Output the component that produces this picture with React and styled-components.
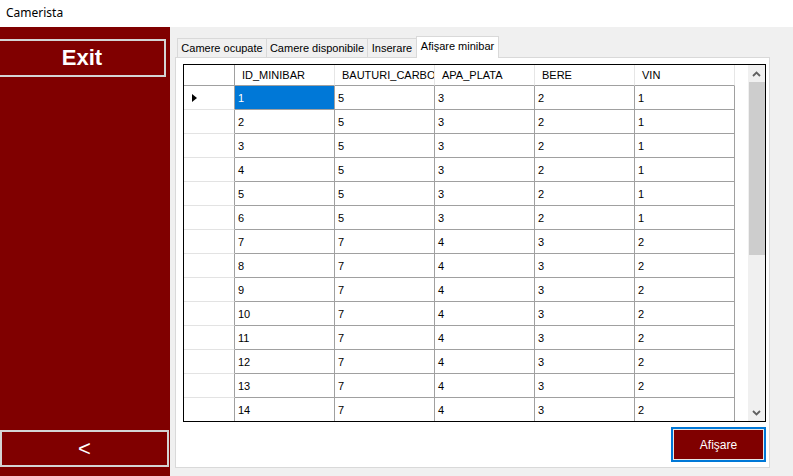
import React from "react";
import styled, { createGlobalStyle } from "styled-components";

const GlobalStyle = createGlobalStyle`
  html, body {
    margin: 0;
    padding: 0;
  }
  body {
    font-family: "Liberation Sans", Arial, sans-serif;
    background: #f0f0f0;
  }
  * {
    box-sizing: border-box;
  }
`;

const Window = styled.div`
  width: 793px;
  height: 476px;
  display: flex;
  flex-direction: column;
  background: #f0f0f0;
  overflow: hidden;
`;

const TitleBar = styled.div`
  height: 27px;
  background: #ffffff;
  display: flex;
  align-items: center;
  padding: 0 0 2px 6px;
  font-family: "Noto Sans", "Liberation Sans", sans-serif;
  font-size: 12px;
  color: #000;
`;

const Body = styled.div`
  flex: 1;
  display: flex;
`;

const Sidebar = styled.div`
  width: 170px;
  background: #800000;
  display: flex;
  flex-direction: column;
  justify-content: space-between;
  padding: 12px 0 9px;
`;

const SideButton = styled.button`
  width: ${(p) => p.$w}px;
  height: ${(p) => p.$h}px;
  margin-left: ${(p) => p.$offset || 0}px;
  border: 2px solid #d4d4d4;
  background: #800000;
  color: #fff;
  font-family: "Liberation Sans", Arial, sans-serif;
  font-weight: ${(p) => (p.$bold ? 700 : 400)};
  font-size: 22px;
  padding: 0;
  display: flex;
  align-items: center;
  justify-content: center;
`;

const Content = styled.div`
  flex: 1;
  display: flex;
  flex-direction: column;
  padding: 9px 23px 8px 5px;
`;

const TabStrip = styled.div`
  height: 21px;
  display: flex;
  align-items: flex-end;
  padding-left: 2px;
`;

const Tab = styled.div`
  width: ${(p) => p.$w}px;
  height: ${(p) => (p.$active ? 22 : 19)}px;
  margin-left: ${(p) => (p.$first ? 0 : -1)}px;
  margin-bottom: ${(p) => (p.$active ? -1 : 0)}px;
  position: relative;
  z-index: ${(p) => (p.$active ? 1 : 0)};
  border: 1px solid #d9d9d9;
  border-bottom: none;
  background: ${(p) => (p.$active ? "#ffffff" : "#f0f0f0")};
  font-size: 11px;
  color: #000;
  display: flex;
  align-items: center;
  justify-content: center;
  padding-bottom: ${(p) => (p.$active ? 3 : 1)}px;
  white-space: nowrap;
`;

const TabPage = styled.div`
  flex: 1;
  border: 1px solid #d9d9d9;
  background: #ffffff;
  display: flex;
  flex-direction: column;
  padding: 6px 3px 5px 7px;
`;

const Grid = styled.div`
  height: 358px;
  border: 1px solid #000;
  background: #fff;
  display: flex;
  overflow: hidden;
`;

const GridBody = styled.div`
  flex: 1;
  display: flex;
  flex-direction: column;
  overflow: hidden;
`;

const Row = styled.div`
  display: grid;
  grid-template-columns: 51px repeat(5, 100px);
  height: ${(p) => (p.$header ? 21 : 24)}px;
  flex-shrink: 0;
`;

const HeaderCell = styled.div`
  border-right: 1px solid ${(p) => (p.$corner ? "#a0a0a0" : "#e6e6e6")};
  border-bottom: 1px solid #a0a0a0;
  padding-left: 7px;
  display: flex;
  align-items: center;
  font-size: 11px;
  color: #000;
  white-space: nowrap;
  overflow: hidden;
`;

const RowHeader = styled.div`
  border-right: 1px solid #a0a0a0;
  border-bottom: 1px solid #e3e3e3;
  display: flex;
  align-items: center;
  padding-left: 8px;
`;

const Arrow = styled.span`
  width: 0;
  height: 0;
  border-top: 4px solid transparent;
  border-bottom: 4px solid transparent;
  border-left: 5px solid #000;
`;

const Cell = styled.div`
  border-right: 1px solid #a0a0a0;
  border-bottom: 1px solid #a0a0a0;
  padding-left: 3px;
  display: flex;
  align-items: center;
  font-size: 11px;
  background: ${(p) => (p.$selected ? "#0078d7" : "#fff")};
  color: ${(p) => (p.$selected ? "#fff" : "#000")};
`;

const Scrollbar = styled.div`
  width: 17px;
  background: #f0f0f0;
  display: flex;
  flex-direction: column;
`;

const ScrollArrow = styled.div`
  height: 17px;
  display: flex;
  align-items: center;
  justify-content: center;
  flex-shrink: 0;
`;

const Thumb = styled.div`
  height: 173px;
  margin-left: 1px;
  background: #cdcdcd;
  flex-shrink: 0;
`;

const Track = styled.div`
  flex: 1;
`;

const Footer = styled.div`
  display: flex;
  justify-content: flex-end;
  margin-top: 5px;
`;

const ActionButton = styled.button`
  width: 95px;
  height: 35px;
  border: 2px solid #0078d7;
  box-shadow: inset 0 0 0 1px #e8e8e8;
  background: #800000;
  color: #fff;
  font-family: "Liberation Sans", Arial, sans-serif;
  font-size: 12px;
  padding: 0;
`;

const Chevron = ({ up }) => (
  <svg width="9" height="6" viewBox="0 0 9 6">
    <path
      d={up ? "M1 5 L4.5 1.5 L8 5" : "M1 1 L4.5 4.5 L8 1"}
      fill="none"
      stroke="#606060"
      strokeWidth="1.8"
    />
  </svg>
);

const tabs = [
  { label: "Camere ocupate", w: 90 },
  { label: "Camere disponibile", w: 102 },
  { label: "Inserare", w: 50 },
  { label: "Afişare minibar", w: 83, active: true },
];

// the second header is clipped by the column width in the screenshot
const columns = ["ID_MINIBAR", "BAUTURI_CARBO", "APA_PLATA", "BERE", "VIN"];

const rows = Array.from({ length: 14 }, (_, i) =>
  i < 6 ? [i + 1, 5, 3, 2, 1] : [i + 1, 7, 4, 3, 2]
);

export default function App() {
  return (
    <>
      <GlobalStyle />
      <Window>
        <TitleBar>Camerista</TitleBar>
        <Body>
          <Sidebar>
            <SideButton $w={168} $h={38} $offset={-2} $bold>
              Exit
            </SideButton>
            <SideButton $w={169} $h={37}>
              &lt;
            </SideButton>
          </Sidebar>
          <Content>
            <TabStrip>
              {tabs.map((t, i) => (
                <Tab key={t.label} $w={t.w} $first={i === 0} $active={t.active}>
                  {t.label}
                </Tab>
              ))}
            </TabStrip>
            <TabPage>
              <Grid>
                <GridBody>
                  <Row $header>
                    <HeaderCell $corner />
                    {columns.map((c) => (
                      <HeaderCell key={c}>{c}</HeaderCell>
                    ))}
                  </Row>
                  {rows.map((r, ri) => (
                    <Row key={ri}>
                      <RowHeader>{ri === 0 && <Arrow />}</RowHeader>
                      {r.map((v, ci) => (
                        <Cell key={ci} $selected={ri === 0 && ci === 0}>
                          {v}
                        </Cell>
                      ))}
                    </Row>
                  ))}
                </GridBody>
                <Scrollbar>
                  <ScrollArrow>
                    <Chevron up />
                  </ScrollArrow>
                  <Thumb />
                  <Track />
                  <ScrollArrow>
                    <Chevron />
                  </ScrollArrow>
                </Scrollbar>
              </Grid>
              <Footer>
                <ActionButton>Afişare</ActionButton>
              </Footer>
            </TabPage>
          </Content>
        </Body>
      </Window>
    </>
  );
}
